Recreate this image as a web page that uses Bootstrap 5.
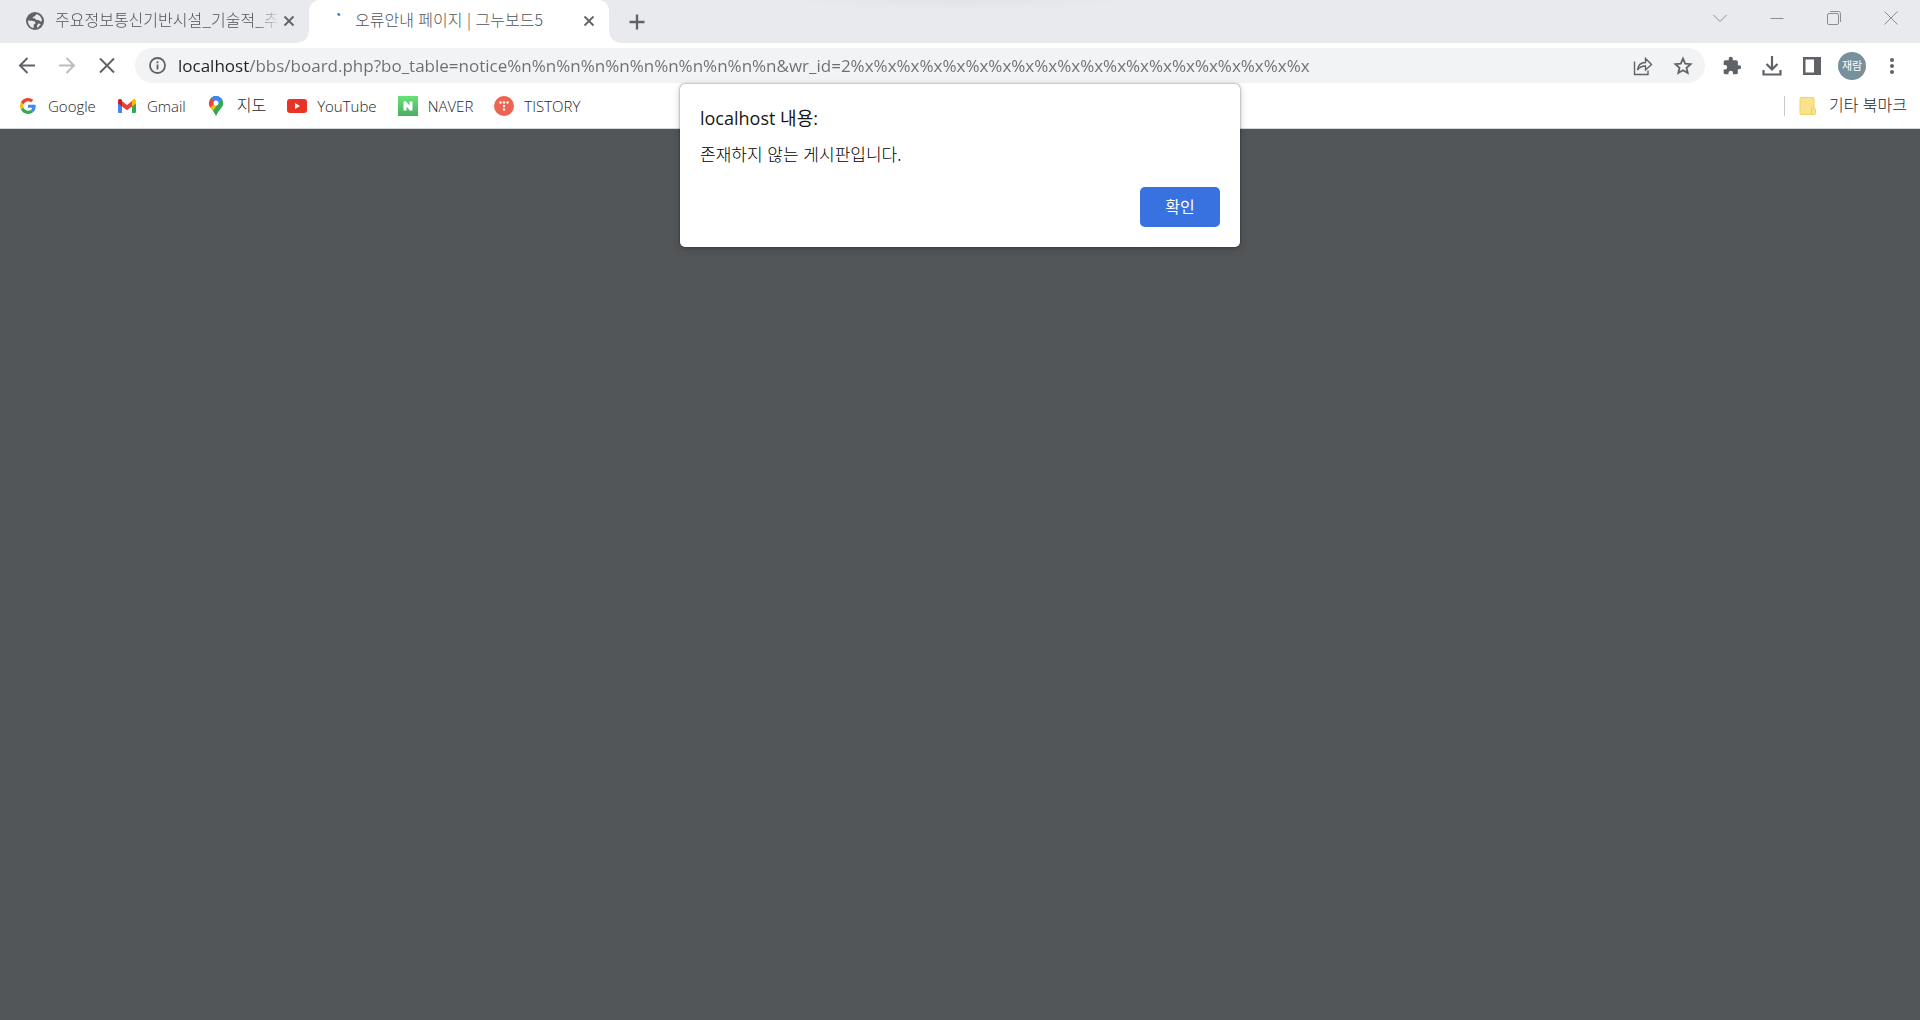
<!DOCTYPE html>
<html lang="ko">
<head>
<meta charset="utf-8">
<meta name="viewport" content="width=device-width, initial-scale=1">
<title>오류안내 페이지 | 그누보드5</title>
<link href="https://cdn.jsdelivr.net/npm/bootstrap@5.3.0/dist/css/bootstrap.min.css" rel="stylesheet">
<style>
:root{--strip:#e8eaed;--ink:#202124;--soft:#5f6368}
body{background:#525659;font-family:"Open Sans","Noto Sans CJK KR",sans-serif;font-size:15px;line-height:20px;color:#3c4043}
svg{display:block;flex:none}
.plain-btn{border:0;background:none;padding:0;color:var(--soft);display:flex;align-items:center;justify-content:center;flex:none}
.tab-strip{background:radial-gradient(ellipse 180px 10px at 50% 0,#e1e3e6,var(--strip));height:43px}
.browser-tab{width:300px;height:43px;padding:0 13px 2px 17px;gap:11px}
.browser-tab.first{margin-left:9px}
.browser-tab a{color:#505458;text-decoration:none;font:300 16px/24px "Noto Sans CJK KR",sans-serif;white-space:nowrap;flex:1;min-width:0;padding-bottom:3px}
.browser-tab.first a{margin-right:-9px;-webkit-mask-image:linear-gradient(90deg,#000 90%,transparent);mask-image:linear-gradient(90deg,#000 90%,transparent)}
.browser-tab.current{background:#fff;border-radius:11px 11px 0 0;position:relative}
.browser-tab.current::before,.browser-tab.current::after{content:"";position:absolute;bottom:0;width:11px;height:11px}
.browser-tab.current::before{left:-11px;background:radial-gradient(circle at 0 0,var(--strip) 10px,#fff 11px)}
.browser-tab.current::after{right:-11px;background:radial-gradient(circle at 100% 0,var(--strip) 10px,#fff 11px)}
.win-btns{margin-right:1px}
.win-btn{width:57px;height:36px;color:#8a8c8f}
.tool-bar{padding:5px 8px 5px 7px}
.nav-btn{width:40px;height:35px}
.omnibox{background:#f1f3f4;height:35px;border-radius:18px;margin:0 7px 0 8px;padding:0 2px 0 14px}
.omnibox input{border:0;outline:0;padding:0;margin-left:12px;min-width:0;font:400 17px/26px "Open Sans","Noto Sans CJK KR",sans-serif;color:transparent;background:linear-gradient(90deg,var(--ink) 71px,#6b6e72 71px);-webkit-background-clip:text;background-clip:text}
.avatar{width:28px;height:28px;border-radius:50%;background:#78909c;color:#fff;font:400 11px/27px "Noto Sans CJK KR",sans-serif}
.mark-bar{height:41px;border-bottom:1px solid #d5d7da;padding:0 13px 5px 18px;gap:21px}
.mark-bar a{color:#1b1d1f;text-decoration:none;gap:10px;font-family:"Open Sans","Noto Sans CJK KR",sans-serif;font-weight:300}
.mark-bar .hangul{font:300 16px/20px "Noto Sans CJK KR",sans-serif;gap:12px}
.mark-bar .hangul span{padding-bottom:3px}
.mark-rule{width:1px;height:20px;background:#c6c8cb;margin-right:-7px}
.alert-box{top:84px;left:50%;width:560px;margin-left:-280px;background:#fff;border-radius:5px;padding:20px;box-shadow:0 0 2px rgba(0,0,0,.6),0 2px 8px rgba(0,0,0,.18);color:#17181a}
.alert-box h1{font:400 18px/28px "Open Sans","Noto Sans CJK KR",sans-serif;margin:0 0 10px}
.alert-box p{font:300 17px/24px "Noto Sans CJK KR",sans-serif;color:#000;margin:0 0 21px}
.ok-btn{background:#3871e0;color:#fff;width:80px;height:40px;border-radius:5px;border:0;padding:0 0 2px;font:400 16px/20px "Noto Sans CJK KR",sans-serif}
</style>
<script src="https://cdn.jsdelivr.net/npm/bootstrap@5.3.0/dist/js/bootstrap.bundle.min.js"></script>
</head>
<body>
<header class="bg-white">
  <div class="tab-strip d-flex">
    <div class="browser-tab first d-flex align-items-center">
      <svg width="18" height="18" viewBox="0 0 18 18"><circle cx="9" cy="9" r="9" fill="#5f6368"/><path d="M2 8.500 5.500 8.700 9 9.500 9.500 11.500 7.800 12.500 7.500 16C4.300 15.400 2 12.500 2 9zM10.500 2.200C13.800 2.900 16 5.700 16 9L14.500 9.500 12.500 8 10.300 8 8.800 6.300 7 6.500 6.800 5 8.500 4.500zM12.500 11.500 14.800 12 12.500 15 11 15.700 11 13.500z" fill="#e8eaed"/></svg>
      <a href="#">주요정보통신기반시설_기술적_추</a>
      <button class="plain-btn" aria-label="탭 닫기"><svg width="14" height="14" viewBox="0 0 14 14" stroke="currentColor" stroke-width="1.800"><path d="m2.500 2.500 9 9M11.500 2.500l-9 9"/></svg></button>
    </div>
    <div class="browser-tab current d-flex align-items-center">
      <svg width="18" height="18" viewBox="0 0 18 18"><path d="m11 1.500 2-.5 1.500 1.500-1 1.500-1.500-.5z" fill="#3871e0"/></svg>
      <a href="#" aria-current="page">오류안내 페이지 | 그누보드5</a>
      <button class="plain-btn" aria-label="탭 닫기"><svg width="14" height="14" viewBox="0 0 14 14" stroke="currentColor" stroke-width="1.800"><path d="m2.500 2.500 9 9M11.500 2.500l-9 9"/></svg></button>
    </div>
    <button class="plain-btn ms-3 ps-1" aria-label="새 탭"><svg width="16" height="16" viewBox="0 0 16 16" stroke="currentColor" stroke-width="2.300"><path d="M8 .5v15M.5 8h15"/></svg></button>
    <div class="win-btns d-flex ms-auto">
      <button class="plain-btn win-btn" aria-label="탭 검색"><svg width="14" height="14" viewBox="0 0 14 14" fill="none" stroke="currentColor"><path d="m.5 4 6.500 6.500L13.500 4"/></svg></button>
      <button class="plain-btn win-btn" aria-label="최소화"><svg width="14" height="14" viewBox="0 0 14 14" stroke="currentColor"><path d="M.5 7.500h13"/></svg></button>
      <button class="plain-btn win-btn" aria-label="이전 크기로"><svg width="14" height="14" viewBox="0 0 14 14" fill="none" stroke="currentColor"><rect x=".5" y="2.500" width="11" height="11" rx="1.500"/><path d="M3 .5h8.500a2 2 0 0 1 2 2V11"/></svg></button>
      <button class="plain-btn win-btn" aria-label="닫기"><svg width="14" height="14" viewBox="0 0 14 14" stroke="currentColor"><path d="m.5.5 13 13M13.500.5l-13 13"/></svg></button>
    </div>
  </div>
  <div class="tool-bar d-flex align-items-center">
    <button class="plain-btn nav-btn" aria-label="뒤로"><svg width="18" height="18" viewBox="0 0 18 18" fill="none" stroke="#5f6368" stroke-width="2"><path d="M17 8.500H2M9.500 1 2 8.500 9.500 16"/></svg></button>
    <button class="plain-btn nav-btn" aria-label="앞으로"><svg width="18" height="18" viewBox="0 0 18 18" fill="none" stroke="#babcbe" stroke-width="2"><path d="M1 8.500h15M8.500 1 16 8.500 8.500 16"/></svg></button>
    <button class="plain-btn nav-btn" aria-label="중지"><svg width="18" height="18" viewBox="0 0 18 18" stroke="#5f6368" stroke-width="2"><path d="m2 1.500 14 14M16 1.500l-14 14"/></svg></button>
    <div class="omnibox d-flex align-items-center flex-grow-1">
      <svg width="17" height="17" viewBox="0 0 17 17" fill="none" stroke="#5f6368" stroke-width="1.800"><circle cx="8.500" cy="8.500" r="7.500"/><path d="M8.500 7.500v5M8.500 4.300v1.900"/></svg>
      <input type="text" aria-label="주소창" class="flex-grow-1" spellcheck="false" value="localhost/bbs/board.php?bo_table=notice%n%n%n%n%n%n%n%n%n%n%n&amp;wr_id=2%x%x%x%x%x%x%x%x%x%x%x%x%x%x%x%x%x%x%x%x">
      <button class="plain-btn nav-btn" aria-label="공유"><svg width="20" height="20" viewBox="0 0 20 20" fill="none" stroke="#5f6368" stroke-width="1.400"><path d="M1.500 5.500v13H15v-4M4.500 14C5 9 8 6.500 12.500 6.500V2.500L18.500 8.500l-6 5.500v-4C9 10 6.500 11 4.500 14z"/></svg></button>
      <button class="plain-btn nav-btn" aria-label="북마크"><svg width="20" height="20" viewBox="0 0 20 20" fill="none" stroke="#5f6368" stroke-width="1.800"><path d="m10 2.600 2.200 5 5.400.5-4.100 3.600 1.200 5.300-4.700-2.800L5.300 17l1.200-5.300-4.100-3.600 5.400-.5z"/></svg></button>
    </div>
    <button class="plain-btn nav-btn" aria-label="확장 프로그램"><svg width="20" height="20" viewBox="0 0 24 24" fill="#5f6368"><path d="M20.500 11H19V7a2 2 0 0 0-2-2h-4V3.500a2.500 2.500 0 0 0-5 0V5H4a2 2 0 0 0-2 2v3.800h1.500a2.700 2.700 0 0 1 0 5.400H2V20a2 2 0 0 0 2 2h3.800v-1.500a2.700 2.700 0 0 1 5.400 0V22H17a2 2 0 0 0 2-2v-4h1.500a2.500 2.500 0 0 0 0-5z"/></svg></button>
    <button class="plain-btn nav-btn" aria-label="다운로드"><svg width="20" height="20" viewBox="0 0 20 20" fill="none" stroke="#5f6368" stroke-width="2.200"><path d="M10 0v13M4.500 8l5.500 5.500L15.500 8M1.500 14v4.500h17V14"/></svg></button>
    <button class="plain-btn nav-btn" aria-label="측면 패널"><svg width="18" height="18" viewBox="0 0 18 18"><path fill="#5f6368" fill-rule="evenodd" d="M0 0h18v18H0zM2.500 2.500v13h8.500v-13z"/></svg></button>
    <button class="plain-btn nav-btn" aria-label="프로필"><span class="avatar">재람</span></button>
    <button class="plain-btn nav-btn" aria-label="메뉴"><svg width="18" height="18" viewBox="0 0 18 18" fill="#5f6368"><circle cx="9" cy="3" r="2"/><circle cx="9" cy="9" r="2"/><circle cx="9" cy="15" r="2"/></svg></button>
  </div>
  <nav class="mark-bar d-flex align-items-center" aria-label="북마크">
    <a href="#" class="d-flex align-items-center"><svg width="20" height="16" viewBox="0 0 52 48"><path fill="#ea4335" d="M26 9.500c3.500 0 6.700 1.200 9.200 3.600l6.900-6.900C37.900 2.400 32.500 0 26 0 16.600 0 8.500 5.400 4.600 13.200l8 6.200C14.400 13.700 19.700 9.500 26 9.500z"/><path fill="#4285f4" d="M49 24.600c0-1.600-.2-3.100-.4-4.600H26v9h12.900c-.6 3-2.200 5.500-4.700 7.200l7.700 6C46.400 38 49 31.800 49 24.600z"/><path fill="#fbbc05" d="M12.500 28.600a14.500 14.500 0 0 1 0-9.200l-8-6.200a24 24 0 0 0 0 21.600z"/><path fill="#34a853" d="M26 48c6.500 0 11.900-2.100 15.900-5.800l-7.700-6c-2.200 1.500-4.900 2.300-8.200 2.300-6.300 0-11.600-4.200-13.500-9.900l-8 6.200C8.500 42.600 16.600 48 26 48z"/></svg>Google</a>
    <a href="#" class="d-flex align-items-center"><svg width="20" height="14" viewBox="-1 0 20 14"><path fill="#4285f4" d="M0 3v10a1 1 0 0 0 1 1h3V5z"/><path fill="#34a853" d="M18 3v10a1 1 0 0 1-1 1h-3V5z"/><path fill="#ea4335" d="M4 2l5 4 5-4v5.500L9 11.300 4 7.500z"/><path fill="#c5221f" d="M0 2C0 0 2-.6 3.500.6L4 1v6.500L0 4.500z"/><path fill="#fbbc04" d="M18 2c0-2-2-2.600-3.500-1.400L14 1v6.500l4-3z"/></svg>Gmail</a>
    <a href="#" class="hangul d-flex align-items-center"><svg width="18" height="20" viewBox="1 0 18 20"><clipPath id="pin"><path d="M10 0a7 7 0 0 1 7 7c0 5-4.500 6-7 13C7.500 13 3 12 3 7a7 7 0 0 1 7-7z"/></clipPath><g clip-path="url(#pin)"><path fill="#34a853" d="M0 0h20v20H0z"/><path fill="#fbbc04" d="M2 11 10 4l3 6-7 7z"/><path fill="#4285f4" d="M3 0h14v3L8 13 5 3z"/><path fill="#ea4335" d="M5 2 10 7l-6 5-2-4z"/><path fill="#fbbc04" d="m4 12 5-5 3 2-6 7z"/><path fill="#34a853" d="m17 2-5 6-6 8 4 4 8-8z"/><path fill="#4285f4" d="M5 2 10-1l6 3.500-6 6z"/></g><circle cx="10" cy="7" r="2.500" fill="#fff"/></svg><span>지도</span></a>
    <a href="#" class="d-flex align-items-center"><svg width="20" height="14" viewBox="0 0 20 14"><rect width="20" height="14" rx="3" fill="#e83426"/><path fill="#fff" d="m8 4 5 3-5 3z"/></svg>YouTube</a>
    <a href="#" class="d-flex align-items-center"><svg width="20" height="20" viewBox="0 0 20 20"><defs><linearGradient id="green" x2="0" y2="1"><stop stop-color="#68e276"/><stop offset="1" stop-color="#4cad67"/></linearGradient></defs><path fill="url(#green)" d="M0 0h20v20H0z"/><path fill="none" stroke="#fff" stroke-width="3" d="M7 14.500v-9M13 14.500v-9M6.500 6l7 8"/></svg>NAVER</a>
    <a href="#" class="d-flex align-items-center"><svg width="20" height="20" viewBox="0 0 20 20"><circle cx="10" cy="10" r="10" fill="#ee6352"/><g fill="#fff"><circle cx="6.500" cy="6.500" r="1.200"/><circle cx="10" cy="6.500" r="1.200"/><circle cx="13.500" cy="6.500" r="1.200"/><circle cx="10" cy="10" r="1.200"/><circle cx="10" cy="13.500" r="1.200"/></g></svg>TISTORY</a>
    <span class="mark-rule ms-auto"></span>
    <a href="#" class="hangul d-flex align-items-center"><svg width="18" height="18" viewBox="0 0 18 18"><path fill="#fbe38e" stroke="#f4d35e" d="M2 .5h12a1 1 0 0 1 1 1V12h1.500v4.500a1 1 0 0 1-1 1H2a1 1 0 0 1-1-1v-15a1 1 0 0 1 1-1z"/><path fill="none" stroke="#f0ca4d" d="M12.500 17v-4a1.500 1.500 0 0 1 3-1"/></svg><span>기타 북마크</span></a>
  </nav>
</header>
<main class="alert-box position-absolute" role="alertdialog" aria-labelledby="alert-title" aria-describedby="alert-text">
  <h1 id="alert-title">localhost 내용:</h1>
  <p id="alert-text">존재하지 않는 게시판입니다.</p>
  <div class="d-flex justify-content-end"><button class="ok-btn">확인</button></div>
</main>
</body>
</html>
